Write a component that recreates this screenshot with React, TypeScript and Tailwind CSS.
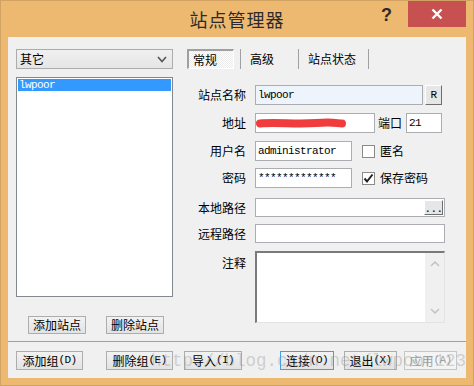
import React from "react";

const cjk = "font-['Noto_Sans_CJK_SC','Noto_Sans',sans-serif]";
const mono = "font-['Liberation_Mono','DejaVu_Sans_Mono',monospace] text-[11px] tracking-[-0.6px]";

function A({ children }: { children: React.ReactNode }) {
  return <span className={mono}>{children}</span>;
}

function Btn({
  children,
  w,
  kind = "normal",
  h = "h-[19px]",
}: {
  children: React.ReactNode;
  w: string;
  kind?: "normal" | "default" | "disabled";
  h?: string;
}) {
  const border =
    kind === "default"
      ? "border-[#3c9ff0]"
      : kind === "disabled"
      ? "border-[#c6c6c6]"
      : "border-[#adadad]";
  const bg =
    kind === "disabled"
      ? "bg-[#f4f4f4] text-[#a0a0a0]"
      : "bg-gradient-to-b from-[#f2f2f2] to-[#e3e3e3] text-black";
  return (
    <div
      className={`${w} ${h} border ${border} ${bg} flex items-center justify-center text-[12px] leading-none shrink-0`}
    >
      {children}
    </div>
  );
}

function Label({ children, top = false }: { children: React.ReactNode; top?: boolean }) {
  return (
    <div
      className={`w-[59px] text-right text-[12px] leading-none text-black shrink-0 ${
        top ? "pt-[6px]" : ""
      }`}
    >
      {children}
    </div>
  );
}

function Input({
  w,
  h = "h-[20px]",
  children,
  className = "",
}: {
  w: string;
  h?: string;
  children?: React.ReactNode;
  className?: string;
}) {
  return (
    <div
      className={`${w} ${h} border border-[#abadb3] flex items-center pl-[2px] relative shrink-0 ${
        className || "bg-white"
      }`}
    >
      {children}
    </div>
  );
}

function Check({ checked }: { checked?: boolean }) {
  return (
    <div className="w-[13px] h-[13px] border border-[#8a8a8a] bg-white shrink-0 flex items-center justify-center">
      {checked && (
        <svg width="11" height="11" viewBox="0 0 11 11">
          <polyline
            points="1.5,5.5 4,8.5 9.5,1.5"
            fill="none"
            stroke="#222"
            strokeWidth="2"
          />
        </svg>
      )}
    </div>
  );
}

function Raised({ w, h, children }: { w: string; h: string; children: React.ReactNode }) {
  return (
    <div
      className={`${w} ${h} bg-[#e6e6e6] border-t border-l border-t-white border-l-white border-r border-b border-r-[#6e6e6e] border-b-[#6e6e6e] flex items-center justify-center shrink-0`}
    >
      {children}
    </div>
  );
}

export default function App() {
  return (
    <div
      className={`w-[474px] h-[386px] bg-[#edb970] border border-[#d2a262] flex flex-col relative overflow-hidden ${cjk}`}
    >
      {/* Title bar */}
      <div className="h-[36px] grid grid-cols-[1fr_auto_1fr] shrink-0">
        <div />
        <div className="pt-[8px] text-[18px] leading-[20px] tracking-[1px] text-[#2b2b2b]">
          站点管理器
        </div>
        <div className="flex justify-end items-start pr-[7px]">
          <div className="mt-[5px] mr-[16px] font-['Liberation_Sans',sans-serif] font-bold text-[18px] leading-[18px] text-[#2b2b2b]">
            ?
          </div>
          <div className="w-[58px] h-[26px] bg-[#c75050] flex items-center justify-center">
            <svg width="12" height="12" viewBox="0 0 12 12">
              <path d="M1.5 1.5 L10.5 10.5 M10.5 1.5 L1.5 10.5" stroke="#fff" strokeWidth="2.4" />
            </svg>
          </div>
        </div>
      </div>

      {/* Client area */}
      <div className="mx-[7px] h-[341px] bg-[#f0f0f0] flex flex-col shrink-0">
        <div className="h-[304px] flex pt-[12px] pl-[8px] shrink-0">
          {/* Left column */}
          <div className="w-[157px] flex flex-col shrink-0">
            <div className="h-[20px] border border-[#acacac] bg-gradient-to-b from-[#f0f0f0] to-[#e5e5e5] flex items-center justify-between pl-[3px] pr-[5px]">
              <span className="text-[12px] leading-none">其它</span>
              <svg width="10" height="7" viewBox="0 0 10 7">
                <polyline points="1,1 5,5.5 9,1" fill="none" stroke="#555" strokeWidth="1.6" />
              </svg>
            </div>
            <div className="mt-[8px] h-[220px] border border-[#828790] bg-white p-[1px]">
              <div className="h-[12px] bg-[#3399ff] text-white flex items-center pl-[1px]">
                <span className={`${mono} leading-none`}>lwpoor</span>
              </div>
            </div>
            <div className="mt-[19px] flex pl-[12px] gap-[20px]">
              <Btn w="w-[58px]" h="h-[18px]">添加站点</Btn>
              <Btn w="w-[58px]" h="h-[18px]">删除站点</Btn>
            </div>
          </div>

          {/* Right column */}
          <div className="ml-[14px] flex flex-col w-[260px] shrink-0">
            {/* tabs */}
            <div className="h-[20px] flex items-stretch text-[12px] leading-none">
              <div className="w-[47px] border-t-2 border-l-2 border-t-[#a0a0a0] border-l-[#a0a0a0] border-b border-r border-b-white border-r-white bg-[repeating-conic-gradient(#ffffff_0_25%,#ebebeb_0_50%)] bg-[length:2px_2px] flex items-center pl-[4px]">
                常规
              </div>
              <div className="w-[6px]" />
              <div className="w-px bg-[#a0a0a0]" />
              <div className="w-[57px] flex items-center pl-[9px]">高级</div>
              <div className="w-px bg-[#a0a0a0]" />
              <div className="w-[69px] flex items-center pl-[9px]">站点状态</div>
              <div className="w-px bg-[#a0a0a0]" />
            </div>

            {/* row 1 */}
            <div className="mt-[16px] flex items-center h-[20px] gap-[9px]">
              <Label>站点名称</Label>
              <div className="flex items-center">
                <Input w="w-[168px]" className="bg-[#eef4fb]">
                  <span className={`${mono} leading-none`}>lwpoor</span>
                </Input>
                <div className="ml-[2px]">
                  <Raised w="w-[17px]" h="h-[20px]">
                    <span className={`${mono} leading-none`}>R</span>
                  </Raised>
                </div>
              </div>
            </div>

            {/* row 2 */}
            <div className="mt-[8px] flex items-center h-[20px] gap-[9px]">
              <Label>地址</Label>
              <div className="flex items-center">
                <Input w="w-[120px]">
                  <svg
                    className="absolute left-0 top-0"
                    width="118"
                    height="18"
                    viewBox="0 0 118 18"
                  >
                    <path
                      d="M4 9.5 C 20 8, 40 10.5, 60 9 S 80 9.5, 86 9.5"
                      fill="none"
                      stroke="#f03c3c"
                      strokeWidth="8"
                      strokeLinecap="round"
                    />
                  </svg>
                </Input>
                <span className="ml-[3px] text-[12px] leading-none">端口</span>
                <div className="ml-[4px]">
                  <Input w="w-[36px]">
                    <span className={`${mono} leading-none`}>21</span>
                  </Input>
                </div>
              </div>
            </div>

            {/* row 3 */}
            <div className="mt-[8px] flex items-center h-[20px] gap-[9px]">
              <Label>用户名</Label>
              <div className="flex items-center">
                <Input w="w-[97px]">
                  <span className={`${mono} leading-none`}>administrator</span>
                </Input>
                <div className="ml-[10px]">
                  <Check />
                </div>
                <span className="ml-[5px] text-[12px] leading-none">匿名</span>
              </div>
            </div>

            {/* row 4 */}
            <div className="mt-[7px] flex items-center h-[20px] gap-[9px]">
              <Label>密码</Label>
              <div className="flex items-center">
                <Input w="w-[97px]">
                  <span className={`${mono} leading-none`}>*************</span>
                </Input>
                <div className="ml-[10px]">
                  <Check checked />
                </div>
                <span className="ml-[5px] text-[12px] leading-none">保存密码</span>
              </div>
            </div>

            {/* row 5 */}
            <div className="mt-[10px] flex items-center h-[19px] gap-[9px]">
              <Label>本地路径</Label>
              <Input w="w-[190px]" h="h-[19px]">
                <div className="absolute right-[1px] top-[1px]">
                  <Raised w="w-[19px]" h="h-[15px]">
                    <span className={`${mono} leading-none pt-[4px]`}>...</span>
                  </Raised>
                </div>
              </Input>
            </div>

            {/* row 6 */}
            <div className="mt-[7px] flex items-center h-[19px] gap-[9px]">
              <Label>远程路径</Label>
              <Input w="w-[190px]" h="h-[19px]" />
            </div>

            {/* row 7 */}
            <div className="mt-[8px] flex items-start gap-[9px]">
              <Label top>注释</Label>
              <div className="w-[190px] h-[72px] border-t-2 border-l-2 border-t-[#7a7a7a] border-l-[#7a7a7a] border-b border-r border-b-[#e3e3e3] border-r-[#e3e3e3] bg-white flex justify-end">
                <div className="w-[19px] h-full bg-[#f0f0f0] flex flex-col items-center justify-between py-[8px]">
                  <svg width="10" height="6" viewBox="0 0 10 6">
                    <polyline points="1,5 5,1 9,5" fill="none" stroke="#c2c2c2" strokeWidth="1.5" />
                  </svg>
                  <svg width="10" height="6" viewBox="0 0 10 6">
                    <polyline points="1,1 5,5 9,1" fill="none" stroke="#c2c2c2" strokeWidth="1.5" />
                  </svg>
                </div>
              </div>
            </div>
          </div>
        </div>

        <div className="h-px bg-[#a0a0a0] shrink-0" />

        {/* bottom buttons */}
        <div className="pt-[9px] pl-[8px] flex items-start">
          <Btn w="w-[67px]">
            添加组<A>(D)</A>
          </Btn>
          <div className="w-[23px]" />
          <Btn w="w-[67px]">
            删除组<A>(E)</A>
          </Btn>
          <div className="w-[11px]" />
          <Btn w="w-[58px]">
            导入<A>(I)</A>
          </Btn>
          <div className="w-[38px]" />
          <Btn w="w-[54px]" kind="default">
            连接<A>(O)</A>
          </Btn>
          <div className="w-[10px]" />
          <Btn w="w-[53px]">
            退出<A>(X)</A>
          </Btn>
          <div className="w-[7px]" />
          <Btn w="w-[53px]" kind="disabled">
            应用<A>(A)</A>
          </Btn>
        </div>
      </div>

      {/* watermark overlay */}
      <div className="absolute left-[150px] top-[352px] font-['Liberation_Mono',monospace] text-[17.5px] leading-none text-[rgba(140,140,140,0.35)] pointer-events-none whitespace-nowrap">
        http://blog.csdn.net/lwpoor123
      </div>
    </div>
  );
}
